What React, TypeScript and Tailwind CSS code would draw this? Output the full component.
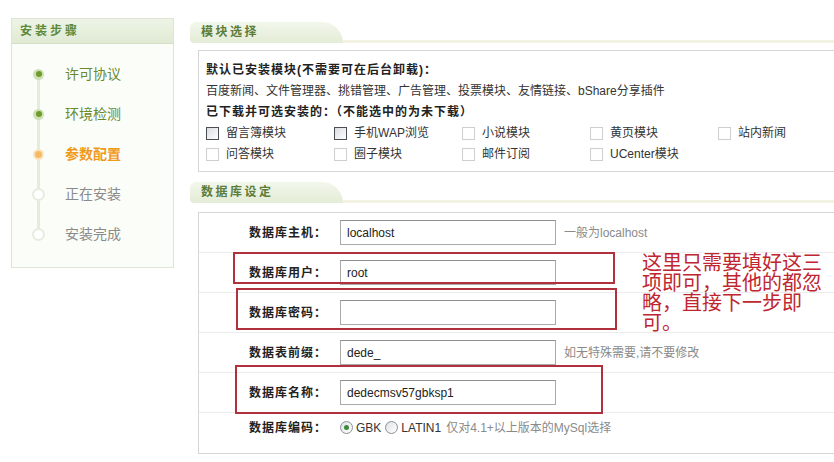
import React from "react";

const F = "font-['Liberation_Sans','Noto_Sans_CJK_SC',sans-serif]";

function SectionTab({ title }: { title: string }) {
  return (
    <div className="flex h-[21px] items-end">
      <div className="h-[21px] w-[153px] shrink-0 rounded-tl-[7px] rounded-bl-[5px] rounded-tr-[26px] bg-gradient-to-b from-[#f2f7ec] to-[#e3ecd6] pl-[11px] text-[12px] font-bold leading-[21px] tracking-[2.5px] text-[#5c7c3a]">
        {title}
      </div>
      <div className="h-[3px] flex-1 bg-[#f3f3e4]" />
    </div>
  );
}

function Dot({ kind }: { kind: "done" | "cur" | "todo" }) {
  if (kind === "done")
    return (
      <div className="flex h-[11px] w-[11px] items-center justify-center rounded-full bg-[#cfe1b4]">
        <div className="h-[6px] w-[6px] rounded-full bg-[#6f9a2c]" />
      </div>
    );
  if (kind === "cur")
    return (
      <div className="flex h-[11px] w-[11px] items-center justify-center rounded-full bg-[#fbe3bf]">
        <div className="h-[7px] w-[7px] rounded-full bg-[#f5bb62]" />
      </div>
    );
  return <div className="h-[13px] w-[13px] rounded-full border-2 border-[#e6ede0] bg-white" />;
}

const steps: { t: string; k: "done" | "cur" | "todo" }[] = [
  { t: "许可协议", k: "done" },
  { t: "环境检测", k: "done" },
  { t: "参数配置", k: "cur" },
  { t: "正在安装", k: "todo" },
  { t: "安装完成", k: "todo" },
];

function Check({ label, on }: { label: string; on?: boolean }) {
  return (
    <div className="flex h-[21px] items-center">
      <div
        className={
          on
            ? "h-[13px] w-[13px] border border-[#4a4f55] bg-gradient-to-br from-[#d9dde0] to-white"
            : "h-[13px] w-[13px] border border-[#cfcfcf] bg-white"
        }
      />
      <span className="ml-[7px]">{label}</span>
    </div>
  );
}

function Row({
  label,
  children,
  last,
}: {
  label: string;
  children: React.ReactNode;
  last?: boolean;
}) {
  return (
    <div
      className={
        last
          ? "flex h-[30px] items-center"
          : "flex h-[40px] items-center border-b border-[#ececec]"
      }
    >
      <div className="w-[128px] shrink-0 text-right text-[12px] font-bold tracking-[1px] text-[#222]">{label}</div>
      <div className="ml-[13px] flex items-center">{children}</div>
    </div>
  );
}

function Input({ value }: { value: string }) {
  return (
    <div className="flex h-[25px] w-[216px] items-center border border-[#a9a9a9] border-t-[#8f8f8f] bg-white pl-[6px] text-[12px] text-[#222]">
      {value}
    </div>
  );
}

function Radio({ on }: { on?: boolean }) {
  return (
    <div className="flex h-[13px] w-[13px] items-center justify-center rounded-full border border-[#8a9096] bg-gradient-to-br from-[#dfe3e6] to-white">
      {on ? <div className="h-[5px] w-[5px] rounded-full bg-[#3d8a3d]" /> : null}
    </div>
  );
}

export default function App() {
  return (
    <div className={`relative h-[462px] w-[834px] overflow-hidden bg-white ${F}`}>
      <div className="flex w-[900px] items-start">
        {/* Sidebar */}
        <div className="ml-[11px] mt-[18px] w-[163px] shrink-0 border border-[#dde6d3] bg-[#fbfdf9]">
          <div className="h-[25px] border-b border-[#d3dfc6] bg-gradient-to-b from-[#eef4e6] to-[#e0ead4] pl-[8px] text-[12px] font-bold leading-[25px] tracking-[3px] text-[#5b8a3a]">
            安装步骤
          </div>
          <div className="relative pb-[13px] pt-[10px]">
            <div className="absolute left-[25px] top-[30px] h-[160px] w-[3px] bg-[#e4ecda]" />
            {steps.map((s) => (
              <div key={s.t} className="relative flex h-[40px] items-center">
                <div className="ml-[20px] flex w-[13px] justify-center">
                  <Dot kind={s.k} />
                </div>
                <span
                  className={
                    s.k === "done"
                      ? "ml-[20px] text-[14px] text-[#6a8a2c]"
                      : s.k === "cur"
                      ? "ml-[20px] text-[14px] font-bold text-[#f09a1a]"
                      : "ml-[20px] text-[14px] text-[#8a8a8a]"
                  }
                >
                  {s.t}
                </span>
              </div>
            ))}
          </div>
        </div>

        {/* Main */}
        <div className="ml-[16px] mt-[22px] w-[700px] shrink-0">
          <SectionTab title="模块选择" />
          <div className="ml-[8px] mt-[7px] border border-[#d6d6d6] pb-[6px] pl-[7px] pt-[9px] text-[12px] leading-[21px] text-[#333]">
            <div className="font-bold tracking-[1px] text-[#222]">默认已安装模块(不需要可在后台卸载)：</div>
            <div>百度新闻、文件管理器、挑错管理、广告管理、投票模块、友情链接、bShare分享插件</div>
            <div className="font-bold tracking-[1px] text-[#222]">已下载并可选安装的：（不能选中的为未下载）</div>
            <div className="grid grid-cols-[128px_128px_128px_128px_128px]">
              <Check label="留言簿模块" on />
              <Check label="手机WAP浏览" on />
              <Check label="小说模块" />
              <Check label="黄页模块" />
              <Check label="站内新闻" />
              <Check label="问答模块" />
              <Check label="圈子模块" />
              <Check label="邮件订阅" />
              <Check label="UCenter模块" />
            </div>
          </div>

          <div className="mt-[10px]">
            <SectionTab title="数据库设定" />
          </div>
          <div className="ml-[8px] mt-[9px] border border-[#d6d6d6] pb-[10px]">
            <Row label="数据库主机：">
              <Input value="localhost" />
              <span className="ml-[8px] text-[12px] text-[#8a8a8a]">一般为localhost</span>
            </Row>
            <Row label="数据库用户：">
              <Input value="root" />
            </Row>
            <Row label="数据库密码：">
              <Input value="" />
            </Row>
            <Row label="数据表前缀：">
              <Input value="dede_" />
              <span className="ml-[8px] text-[12px] text-[#8a8a8a]">如无特殊需要,请不要修改</span>
            </Row>
            <Row label="数据库名称：">
              <Input value="dedecmsv57gbksp1" />
            </Row>
            <Row label="数据库编码：" last>
              <div className="mb-[1px] flex items-center text-[12px] text-[#333]">
                <Radio on />
                <span className="ml-[3px]">GBK</span>
                <div className="ml-[4px]">
                  <Radio />
                </div>
                <span className="ml-[3px]">LATIN1</span>
                <span className="ml-[5px] text-[#8a8a8a]">仅对4.1+以上版本的MySql选择</span>
              </div>
            </Row>
          </div>

          <div className="mt-[8px]">
            <SectionTab title="" />
          </div>
        </div>
      </div>

      {/* Annotation overlays */}
      <div className="absolute left-[233px] top-[252px] h-[32px] w-[382px] border-2 border-[#b0303c]" />
      <div className="absolute left-[236px] top-[288px] h-[42px] w-[381px] border-2 border-[#b0303c]" />
      <div className="absolute left-[235px] top-[365px] h-[49px] w-[368px] border-2 border-[#b0303c]" />
      <div className="absolute left-[642px] top-[253px] w-[190px] text-[20px] leading-[20px] text-[#c0262f]">
        这里只需要填好这三
        <br />
        项即可，其他的都忽
        <br />
        略，直接下一步即
        <br />
        可。
      </div>
    </div>
  );
}
